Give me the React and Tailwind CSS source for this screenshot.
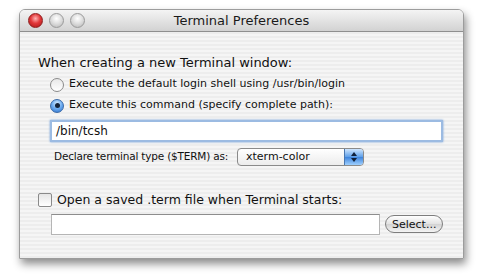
import React from 'react';

const FONT = { fontFamily: '"DejaVu Sans", "Lucida Grande", sans-serif' };

function Light({ red }) {
  return (
    <span
      className={
        red
          ? 'w-[15px] h-[15px] rounded-full border border-[#8e1e1e] bg-[radial-gradient(circle_at_50%_35%,#ffb3b3_0%,#e2383a_45%,#a91616_100%)]'
          : 'w-[15px] h-[15px] rounded-full border border-[#9a9a9a] bg-[radial-gradient(circle_at_50%_35%,#ffffff_0%,#dcdcdc_50%,#b4b4b4_100%)]'
      }
    />
  );
}

function Radio({ on }) {
  if (on) {
    return (
      <span className="w-[14px] h-[14px] rounded-full border border-[#3a6aa8] bg-[radial-gradient(circle_at_50%_30%,#d6ecff_0%,#6aaaf0_50%,#2c6fc9_100%)] flex items-center justify-center shrink-0">
        <span className="w-[5px] h-[5px] rounded-full bg-[#14233a]" />
      </span>
    );
  }
  return (
    <span className="w-[14px] h-[14px] rounded-full border border-[#8a8a8a] bg-[linear-gradient(to_bottom,#e8e8e8,#ffffff)] shrink-0" />
  );
}

export default function App() {
  return (
    <div className="w-[485px] h-[279px] bg-white pt-[9px] pl-[19px]" style={FONT}>
      <div className="w-[445px] h-[250px] rounded-t-[6px] border border-[#9c9c9c] shadow-[2px_5px_8px_rgba(0,0,0,0.45)] overflow-hidden flex flex-col">
        {/* title bar */}
        <div className="h-[22px] shrink-0 flex items-center bg-[linear-gradient(to_bottom,#f4f4f4,#d2d2d2)] border-b border-[#8f8f8f] relative">
          <div className="flex gap-[6px] pl-[8px]">
            <Light red />
            <Light />
            <Light />
          </div>
          <div className="absolute inset-0 flex items-center justify-center text-[13px] text-[#1a1a1a]">
            Terminal Preferences
          </div>
        </div>

        {/* body */}
        <div className="flex-1 bg-[repeating-linear-gradient(to_bottom,#ededed_0px,#ededed_2px,#f5f5f5_2px,#f5f5f5_4px)] pl-[18px] pr-[20px] pt-[23px] text-[#111]">
          <div className="text-[13px] leading-[16px]">When creating a new Terminal window:</div>

          <div className="pl-[12px] mt-[6px] flex flex-col gap-[6px] text-[11px]">
            <div className="flex items-center gap-[5px] h-[15px]">
              <Radio />
              <span>Execute the default login shell using /usr/bin/login</span>
            </div>
            <div className="flex items-center gap-[5px] h-[15px]">
              <Radio on />
              <span>Execute this command (specify complete path):</span>
            </div>
          </div>

          <div className="ml-[12px] mt-[7px] h-[22px] bg-white border-2 border-[#9cbbe2] shadow-[0_0_2px_#6c9bd6] flex items-center px-[4px] text-[12px]">
            /bin/tcsh
          </div>

          <div className="ml-[16px] mt-[6px] flex items-center gap-[9px] text-[10.5px]">
            <span className="tracking-[-0.2px]">Declare terminal type ($TERM) as:</span>
            <div className="w-[127px] h-[18px] rounded-[4px] border border-[#8a8a8a] bg-[linear-gradient(to_bottom,#ffffff,#ececec)] flex items-center overflow-hidden">
              <span className="flex-1 pl-[8px] text-[11px]">xterm-color</span>
              <span className="w-[19px] h-full bg-[linear-gradient(to_bottom,#cfe6ff,#5c9ee8_50%,#3d83dc_51%,#9fd0ff)] border-l border-[#4a78b0] flex flex-col items-center justify-center gap-[2px]">
                <svg width="6" height="4" viewBox="0 0 6 4"><path d="M0 4 L3 0 L6 4 Z" fill="#10203a" /></svg>
                <svg width="6" height="4" viewBox="0 0 6 4"><path d="M0 0 L3 4 L6 0 Z" fill="#10203a" /></svg>
              </span>
            </div>
          </div>

          <div className="mt-[25px] flex items-center gap-[5px] text-[12.5px]">
            <span className="w-[14px] h-[14px] rounded-[2px] border border-[#8a8a8a] bg-[linear-gradient(to_bottom,#e6e6e6,#ffffff)] shrink-0" />
            <span>Open a saved .term file when Terminal starts:</span>
          </div>

          <div className="ml-[13px] mt-[4px] flex items-center gap-[5px]">
            <div className="w-[332px] h-[21px] bg-white border border-[#b5b5b5] border-t-[#8d8d8d]" />
            <button className="w-[58px] h-[18px] rounded-full border border-[#7d7d7d] bg-[linear-gradient(to_bottom,#ffffff,#e2e2e2_50%,#d2d2d2_51%,#f4f4f4)] text-[11px] text-[#111] flex items-center justify-center leading-none">
              Select...
            </button>
          </div>
        </div>
      </div>
    </div>
  );
}
